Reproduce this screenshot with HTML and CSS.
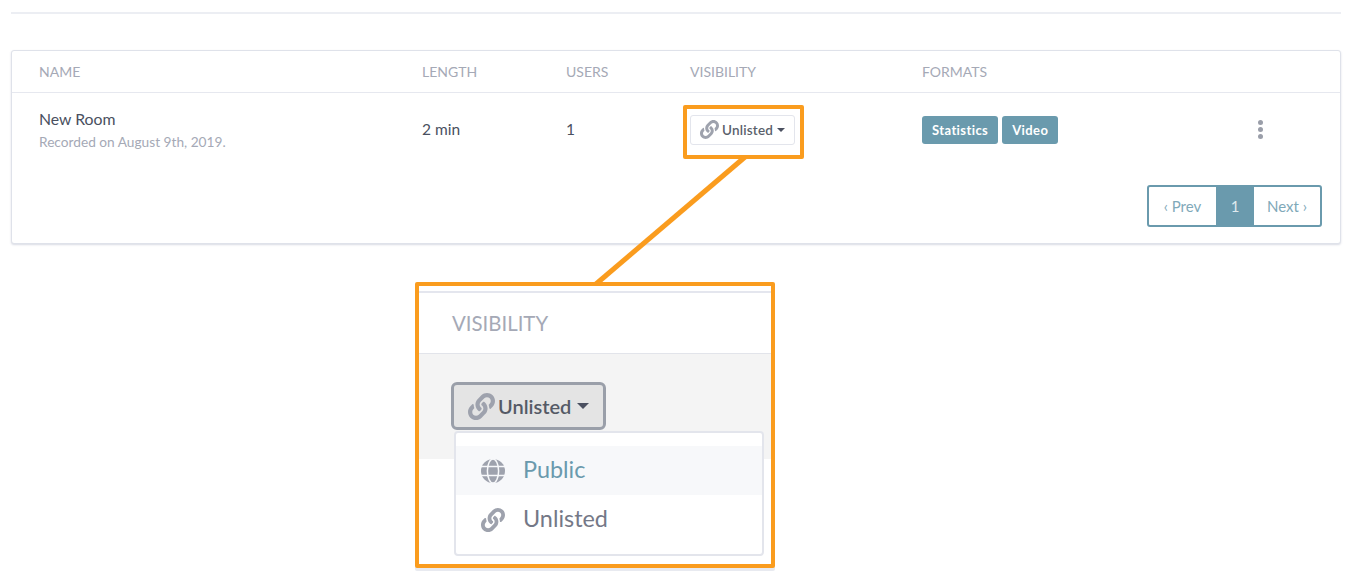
FILE: index.html
```html
<!DOCTYPE html>
<html lang="en">
<head>
<meta charset="utf-8">
<title>Recordings</title>
<link rel="stylesheet" href="styles.css">
</head>
<body>
<svg class="defs" width="0" height="0" aria-hidden="true">
  <symbol id="link" viewBox="0 0 512 512"><path d="M326.612 185.391c59.747 59.809 58.927 155.698.36 214.59-.11.12-.24.25-.36.37l-67.2 67.2c-59.27 59.27-155.699 59.262-214.96 0-59.27-59.26-59.27-155.7 0-214.96l37.106-37.106c9.84-9.84 26.786-3.3 27.294 10.606.648 17.722 3.826 35.527 9.69 52.721 1.986 5.822.567 12.262-3.783 16.612l-13.087 13.087c-28.026 28.026-28.905 73.66-1.155 101.96 28.024 28.579 74.086 28.749 102.325.51l67.2-67.19c28.191-28.191 28.073-73.757 0-101.83-3.701-3.694-7.429-6.564-10.341-8.569a16.037 16.037 0 0 1-6.947-12.606c-.396-10.567 3.348-21.456 11.698-29.806l21.054-21.055c5.521-5.521 14.182-6.199 20.584-1.731a152.482 152.482 0 0 1 20.522 17.197zM467.547 44.449c-59.261-59.262-155.69-59.27-214.96 0l-67.2 67.2c-.12.12-.25.25-.36.37-58.566 58.892-59.387 154.781.36 214.59a152.454 152.454 0 0 0 20.521 17.196c6.402 4.468 15.064 3.789 20.584-1.731l21.054-21.055c8.35-8.35 12.094-19.239 11.698-29.806a16.037 16.037 0 0 0-6.947-12.606c-2.912-2.005-6.64-4.875-10.341-8.569-28.073-28.073-28.191-73.639 0-101.83l67.2-67.19c28.239-28.239 74.3-28.069 102.325.51 27.75 28.3 26.872 73.934-1.155 101.96l-13.087 13.087c-4.35 4.35-5.769 10.79-3.783 16.612 5.864 17.194 9.042 34.999 9.69 52.721.509 13.906 17.454 20.446 27.294 10.606l37.106-37.106c59.271-59.259 59.271-155.699.001-214.959z"/></symbol>
  <symbol id="globe" viewBox="0 0 24 24">
    <circle cx="12" cy="12" r="12"/>
    <g fill="none" stroke="#f7f8fa" stroke-width="1.5">
      <ellipse cx="12" cy="12" rx="5.6" ry="12"/>
      <path d="M0 7.6h24M0 16.4h24"/>
    </g>
  </symbol>
</svg>

<div class="page">
  <hr class="rule">
  <section class="card">
    <div class="row head">
      <div>NAME</div><div>LENGTH</div><div>USERS</div><div>VISIBILITY</div><div>FORMATS</div><div></div>
    </div>
    <div class="row body-row">
      <div>
        <div class="room">New Room</div>
        <div class="date">Recorded on August 9th, 2019.</div>
      </div>
      <div class="cell-text">2 min</div>
      <div class="cell-text">1</div>
      <div>
        <button class="vis-btn" type="button">
          <svg class="ic-link"><use href="#link"/></svg>Unlisted<span class="caret"></span>
        </button>
      </div>
      <div class="formats"><span class="badge">Statistics</span><span class="badge">Video</span></div>
      <div class="dots"><i></i><i></i><i></i></div>
    </div>
    <div class="pager-wrap">
      <nav class="pager">
        <a class="prev">‹ Prev</a><a class="current">1</a><a class="next">Next ›</a>
      </nav>
    </div>
  </section>
</div>

<svg class="connector" width="1360" height="585" aria-hidden="true">
  <path d="M745 157 596 284"/>
</svg>
<div class="highlight"></div>

<aside class="callout">
  <div class="callout-head">VISIBILITY</div>
  <div class="callout-band">
    <button class="big-btn" type="button">
      <svg class="ic-big"><use href="#link"/></svg>Unlisted<span class="caret big"></span>
    </button>
  </div>
  <div class="menu">
    <div class="item active"><svg class="ic-menu"><use href="#globe"/></svg><span class="item-label">Public</span></div>
    <div class="item"><svg class="ic-menu"><use href="#link"/></svg><span class="item-label">Unlisted</span></div>
  </div>
</aside>
</body>
</html>
```

FILE: styles.css
```css
* { box-sizing: border-box; }
html, body { margin: 0; height: 585px; overflow: hidden; background: #fff; }
body { position: relative; font-family: "Lato", "Liberation Sans", sans-serif; color: #495060; }
.defs { position: absolute; }

.page { padding: 12px 19px 0 11px; }
.rule { margin: 0 0 36px; border: 0; border-top: 2px solid #eceef3; }

.card {
  height: 194px;
  border: 1px solid #dfe2ea;
  border-radius: 3px;
  box-shadow: 0 1px 2px rgba(170, 176, 195, .45);
  background: #fff;
}
.row {
  display: grid;
  grid-template-columns: 383px 144px 124px 232px 334px 20px;
  padding-left: 27px;
  align-items: center;
}
.head {
  height: 42px;
  border-bottom: 1px solid #e6e8ef;
  font-size: 14px;
  color: #a5a9b6;
}
.body-row { height: 73px; font-size: 15.5px; color: #495060; }
.cell-text { margin-top: -2px; }
.room { font-size: 15.8px; line-height: 20px; }
.date { font-size: 13.7px; line-height: 18px; margin-top: 4px; color: #a5a9b6; }

.vis-btn {
  display: flex;
  align-items: center;
  width: 105px;
  height: 30px;
  padding: 0 0 0 9px;
  border: 1.5px solid #e3e5ec;
  border-radius: 3px;
  background: #fff;
  font: 600 13.5px "Lato", sans-serif;
  letter-spacing: .2px;
  color: #5a5f6b;
}
.ic-link { width: 19px; height: 19px; margin-right: 3px; fill: #9ea2ad; }
.caret {
  width: 0; height: 0;
  margin-left: 4px;
  border: 4px solid transparent;
  border-top-color: #4b5060;
  border-bottom: 0;
}
.formats { display: flex; gap: 4px; }
.badge {
  display: flex;
  align-items: center;
  height: 28px;
  padding: 0 10px;
  border-radius: 3px;
  background: #6a9aad;
  color: #fff;
  font-size: 13px;
  font-weight: 700;
  letter-spacing: .4px;
}
.dots { display: flex; flex-direction: column; gap: 2px; width: 6px; margin-left: 2px; }
.dots i { width: 5px; height: 5px; border-radius: 50%; background: #9a9ea9; }

.pager-wrap { display: flex; justify-content: flex-end; padding: 19px 18px 0 0; }
.pager {
  display: flex;
  height: 42px;
  border: 2px solid #6a9aad;
  border-radius: 3px;
  font-size: 15px;
  color: #7fa9b9;
}
.pager a { display: flex; align-items: center; justify-content: center; }
.prev { width: 67px; }
.current { width: 38px; background: #6a9aad; color: #dfeaee; }
.next { width: 66px; }

.connector { position: absolute; left: 0; top: 0; pointer-events: none; }
.connector path { fill: none; stroke: #fa9c1e; stroke-width: 5; }
.highlight {
  position: absolute;
  left: 683px; top: 105px;
  width: 121px; height: 54px;
  border: 4px solid #fa9c1e;
  border-radius: 2px;
}

.callout {
  position: absolute;
  left: 415px; top: 282px;
  width: 360px; height: 286px;
  padding-top: 5px;
  border: 4px solid #fa9c1e;
  border-radius: 2px;
  background: #fff;
  box-shadow: 0 3px 0 #e8eaf0;
}
.callout-head {
  height: 63px;
  padding-left: 33px;
  border-top: 2px solid #e4e6ee;
  border-bottom: 1px solid #e2e4ea;
  font-size: 20.4px;
  line-height: 60px;
  color: #a5a9b6;
}
.callout-band { height: 105px; padding: 28px 0 0 32px; background: #f4f4f4; }
.big-btn {
  display: flex;
  align-items: center;
  width: 155px;
  height: 48px;
  padding: 0 0 0 14px;
  border: 3px solid #9a9fa9;
  border-radius: 6px;
  background: #e4e4e4;
  font: 600 20px "Lato", sans-serif;
  color: #555a66;
}
.ic-big { width: 27px; height: 27px; margin-right: 3px; fill: #9ea2ad; }
.caret.big { margin-left: 6px; border-width: 6px; border-bottom: 0; }

.menu {
  position: absolute;
  left: 35px; top: 145px;
  width: 310px; height: 125px;
  padding-top: 13px;
  border: 2px solid #e3e5ec;
  border-radius: 4px;
  background: #fff;
}
.item {
  display: flex;
  align-items: center;
  height: 49px;
  padding-left: 25px;
  font-size: 23.4px;
  color: #747887;
}
.item.active { background: #f7f8fa; color: #6a9aad; }
.item-label { margin-top: -3px; }
.ic-menu { width: 24px; height: 24px; margin-right: 18px; fill: #9ea2ad; }
```
